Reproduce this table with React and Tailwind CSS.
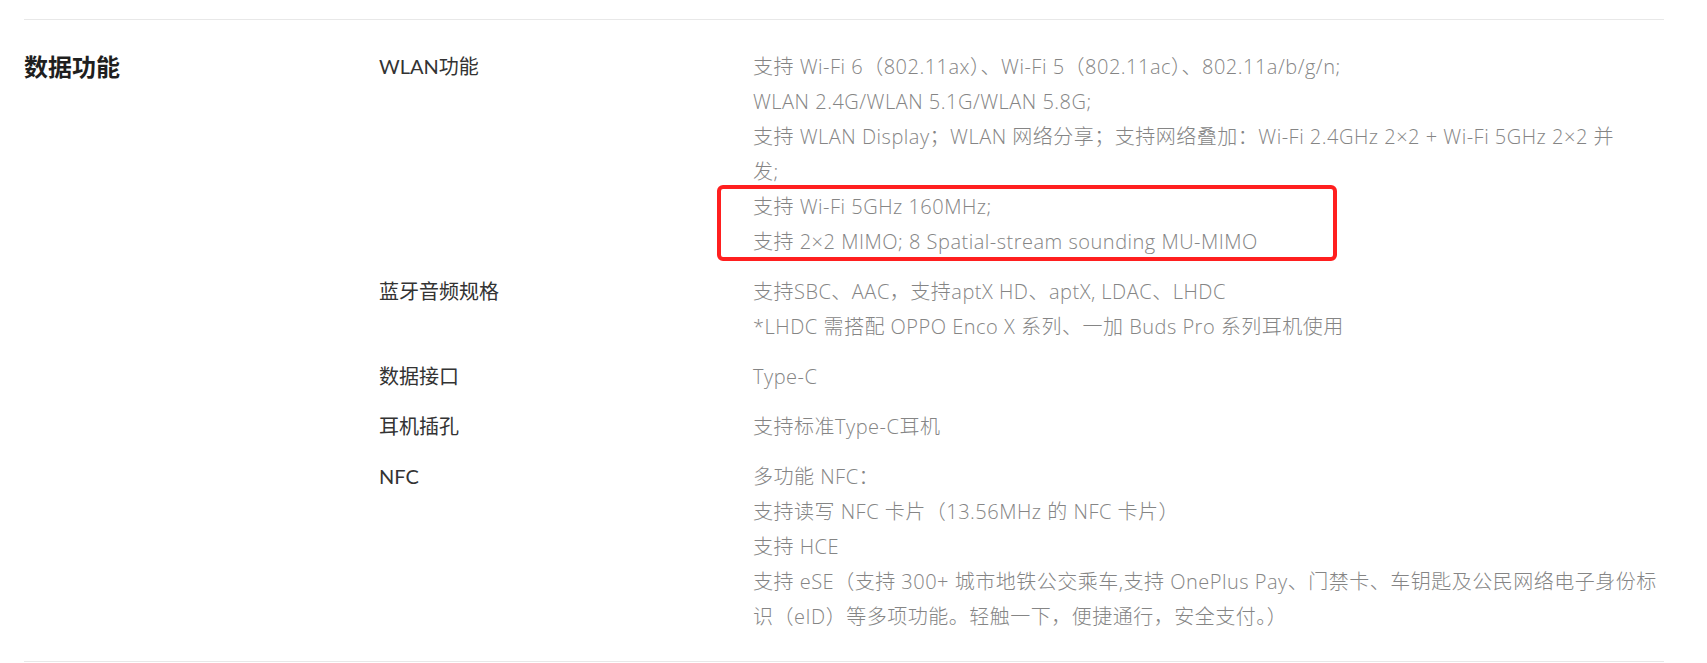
import React from 'react';

const specs = [
    {
        label: 'WLAN功能',
        lines: [
            '支持 Wi-Fi 6（802.11ax）、Wi-Fi 5（802.11ac）、802.11a/b/g/n;',
            'WLAN 2.4G/WLAN 5.1G/WLAN 5.8G;',
            '支持 WLAN Display；WLAN 网络分享；支持网络叠加：Wi-Fi 2.4GHz 2×2 + Wi-Fi 5GHz 2×2 并',
            '发;',
        ],
        marked: ['支持 Wi-Fi 5GHz 160MHz;', '支持 2×2 MIMO; 8 Spatial-stream sounding MU-MIMO'],
    },
    {
        label: '蓝牙音频规格',
        lines: ['支持SBC、AAC，支持aptX HD、aptX, LDAC、LHDC', '*LHDC 需搭配 OPPO Enco X 系列、一加 Buds Pro 系列耳机使用'],
    },
    { label: '数据接口', lines: ['Type-C'] },
    { label: '耳机插孔', lines: ['支持标准Type-C耳机'] },
    {
        label: 'NFC',
        lines: [
            '多功能 NFC：',
            '支持读写 NFC 卡片（13.56MHz 的 NFC 卡片）',
            '支持 HCE',
            '支持 eSE（支持 300+ 城市地铁公交乘车,支持 OnePlus Pay、门禁卡、车钥匙及公民网络电子身份标',
            '识（eID）等多项功能。轻触一下，便捷通行，安全支付。）',
        ],
    },
];

const SpecRow = ({ spec }) => (
    <div className="flex">
        <div className="w-[374px] shrink-0 text-[20px] leading-[35px] text-[#333333]">{spec.label}</div>
        <div className="flex-1 text-[20px] leading-[35px] font-light tracking-[0.5px] text-[#858585] whitespace-nowrap font-['Open_Sans','Noto_Sans_CJK_SC',sans-serif]">
            {spec.lines.map((line, i) => (
                <p key={i}>{line}</p>
            ))}
            {spec.marked && (
                <div className="relative">
                    {spec.marked.map((line, i) => (
                        <p key={i}>{line}</p>
                    ))}
                    <div className="absolute left-[-36px] top-[-4px] w-[620px] h-[76px] border-4 border-[#ff1f1f] rounded-[6px]" />
                </div>
            )}
        </div>
    </div>
);

export default function App() {
    return (
        <div className="min-h-screen bg-white pl-[24px] pr-[43px] pt-[19px] font-['Lato','Noto_Sans_CJK_SC',sans-serif]">
            <section className="border-t border-b border-[#e8e8e8] pt-[29px] pb-[27px] flex">
                <h2 className="w-[355px] shrink-0 text-[24px] leading-[35px] font-bold text-[#1f1f1f]">数据功能</h2>
                <div className="flex-1 flex flex-col gap-[15px]">
                    {specs.map((spec) => (
                        <SpecRow key={spec.label} spec={spec} />
                    ))}
                </div>
            </section>
        </div>
    );
}
